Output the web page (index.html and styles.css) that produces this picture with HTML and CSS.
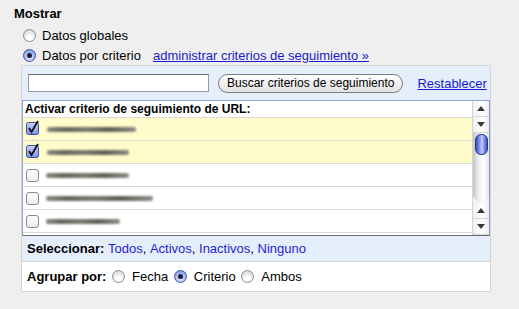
FILE: index.html
```html
<!DOCTYPE html>
<html lang="es">
<head>
    <meta charset="UTF-8">
    <title>Mostrar</title>
    <link rel="stylesheet" href="styles.css">
</head>
<body>
    <div class="page">
        <div class="title">Mostrar</div>

        <div class="options">
            <div class="option"><span class="radio"></span>Datos globales</div>
            <div class="option"><span class="radio on"></span>Datos por criterio<a class="manage-link" href="#">administrar criterios de seguimiento »</a></div>
        </div>

        <div class="panel">
            <div class="search-row">
                <input class="search-input" type="text">
                <button class="search-btn">Buscar criterios de seguimiento</button>
                <a class="reset-link" href="#">Restablecer</a>
            </div>

            <div class="listbox">
                <div class="rows">
                    <div class="list-head">Activar criterio de seguimiento de URL:</div>
                    <div class="row active">
                        <svg class="check" width="14" height="15" viewBox="0 0 14 15"><defs><linearGradient id="cg" x1="0" y1="0" x2="0" y2="1"><stop offset="0" stop-color="#c9d3fa"/><stop offset="1" stop-color="#7d92e4"/></linearGradient></defs><rect x="0.5" y="2.5" width="12" height="12" rx="2" fill="url(#cg)" stroke="#3f4f9e"/><path d="M3 8 L5.5 12 L12 1" fill="none" stroke="#111" stroke-width="1.8"/></svg>
                        <span class="blur b1"></span>
                    </div>
                    <div class="row active">
                        <svg class="check" width="14" height="15" viewBox="0 0 14 15"><rect x="0.5" y="2.5" width="12" height="12" rx="2" fill="url(#cg)" stroke="#3f4f9e"/><path d="M3 8 L5.5 12 L12 1" fill="none" stroke="#111" stroke-width="1.8"/></svg>
                        <span class="blur b2"></span>
                    </div>
                    <div class="row"><span class="box"></span><span class="blur b3"></span></div>
                    <div class="row"><span class="box"></span><span class="blur b4"></span></div>
                    <div class="row"><span class="box"></span><span class="blur b5"></span></div>
                    <div class="row"><span class="box"></span><span class="blur b1"></span></div>
                </div>
                <div class="scrollbar">
                    <div class="arrow up"></div>
                    <div class="arrow down"></div>
                    <div class="track"><div class="thumb"></div></div>
                    <div class="arrow up"></div>
                    <div class="arrow down"></div>
                </div>
            </div>

            <div class="select-bar">
                <b>Seleccionar:</b>&nbsp;<a href="#">Todos</a>, <a href="#">Activos</a>, <a href="#">Inactivos</a>, <a href="#">Ninguno</a>
            </div>

            <div class="group-bar">
                <b>Agrupar por:</b>
                <span class="radio"></span>Fecha
                <span class="radio on"></span>Criterio
                <span class="radio"></span>Ambos
            </div>
        </div>
    </div>
</body>
</html>
```

FILE: styles.css
```css
body {
    margin: 0;
    background-color: #efefef;
    font-family: 'Liberation Sans', Arial, sans-serif;
    font-size: 13px;
    color: #000;
}

.page {
    padding: 6px 0 0 14px;
}

.title {
    font-weight: bold;
    line-height: 16px;
}

.options {
    margin-top: 3px;
    padding-left: 9px;
}

.option {
    display: flex;
    align-items: center;
    height: 20px;
}

.radio {
    display: inline-block;
    box-sizing: border-box;
    width: 13px;
    height: 13px;
    border-radius: 50%;
    border: 1px solid #8c8c8c;
    background: radial-gradient(circle at 50% 75%, #ffffff 20%, #d4d4d4 90%);
    vertical-align: -2px;
    position: relative;
}

.radio.on {
    border-color: #3a55ad;
    background: radial-gradient(circle at 50% 70%, #d4defb 15%, #6f8cdf 95%);
}

.radio.on::after {
    content: '';
    position: absolute;
    left: 3px;
    top: 3px;
    width: 5px;
    height: 5px;
    border-radius: 50%;
    background: #1c1f3c;
}

.option .radio {
    margin-right: 6px;
}

.manage-link {
    margin-left: 12px;
    color: #1a1acc;
}

.panel {
    margin-left: 7px;
    width: 470px;
    box-sizing: border-box;
    border: 1px solid #d6d6d6;
    background: #e5effb;
}

.search-row {
    display: flex;
    align-items: center;
    height: 34px;
    padding-left: 6px;
}

.search-input {
    box-sizing: border-box;
    width: 181px;
    height: 18px;
    margin: 0;
    padding: 0 3px;
    border: 1px solid #9a9a9a;
    border-top-color: #6e6e6e;
    background: #fff;
}

.search-btn {
    height: 19px;
    margin-left: 9px;
    padding: 0 8px;
    border: 1px solid #7c7c7c;
    border-radius: 10px;
    background: linear-gradient(#ffffff, #f0f0f0 50%, #e2e2e2);
    font-family: 'Liberation Sans', Arial, sans-serif;
    font-size: 12px;
    color: #000;
}

.reset-link {
    margin-left: 14px;
    color: #1a1acc;
}

.listbox {
    display: flex;
    height: 136px;
    box-sizing: border-box;
    border: 1px solid #8ca6cb;
    border-bottom-color: #6d6d6d;
    border-right-color: #7f9ac4;
    background: #fff;
}

.rows {
    flex: 1;
    overflow: hidden;
}

.list-head {
    height: 16px;
    line-height: 16px;
    padding-left: 2px;
    font-size: 12px;
    font-weight: bold;
    border-bottom: 1px solid #dadada;
}

.row {
    display: flex;
    align-items: center;
    height: 22px;
    padding-left: 3px;
    border-bottom: 1px solid #dadada;
}

.row.active {
    background: #fffbcb;
}

.check {
    margin-top: -3px;
    flex: none;
}

.box {
    box-sizing: border-box;
    width: 13px;
    height: 13px;
    border: 1px solid #8a8a8a;
    border-radius: 3px;
    background: linear-gradient(#ffffff, #ececec);
    flex: none;
    margin-top: 1px;
}

.blur {
    height: 5px;
    margin-left: 7px;
    border-radius: 2px;
    background: linear-gradient(90deg, #8a8a80, #66665e 20%, #7a7a70 45%, #606058 70%, #8e8e86);
    filter: blur(0.9px);
}

.b1 { width: 89px; }
.b2 { width: 82px; }
.b3 { width: 83px; }
.b4 { width: 107px; }
.b5 { width: 74px; }

.scrollbar {
    width: 16px;
    display: flex;
    flex-direction: column;
    border-left: 1px solid #d4d4d4;
    background: #f4f4f4;
}

.arrow {
    height: 15px;
    flex: none;
    position: relative;
    background: linear-gradient(90deg, #f0f0f0, #ffffff 60%, #eeeeee);
    border-bottom: 1px solid #d6d6d6;
}

.arrow::after {
    content: '';
    position: absolute;
    left: 4px;
    top: 5px;
    border-left: 4px solid transparent;
    border-right: 4px solid transparent;
}

.arrow.up::after {
    border-bottom: 5px solid #3a3a3a;
}

.arrow.down::after {
    border-top: 5px solid #3a3a3a;
}

.track {
    flex: 1;
    background: linear-gradient(90deg, #c6c6c6, #eeeeee 35%, #ffffff 65%, #e4e4e4);
    border-radius: 0 0 8px 8px;
    margin-bottom: 1px;
}

.thumb {
    box-sizing: border-box;
    width: 13px;
    height: 21px;
    margin: 1px auto 0;
    border: 1px solid #25358f;
    border-radius: 6px;
    background: linear-gradient(90deg, #3a50c0, #95a6f0 40%, #c2cbf8 55%, #5f74d6 85%, #4055c2);
}

.select-bar {
    display: flex;
    align-items: center;
    height: 25px;
    padding-left: 5px;
    white-space: pre;
}

.select-bar a {
    color: #1e1ed2;
    text-decoration: none;
}

.group-bar {
    height: 29px;
    line-height: 29px;
    padding-left: 5px;
    border-top: 1px solid #d6d6d6;
    background: #fff;
}

.group-bar .radio {
    margin: 0 7px 0 2px;
}
```
